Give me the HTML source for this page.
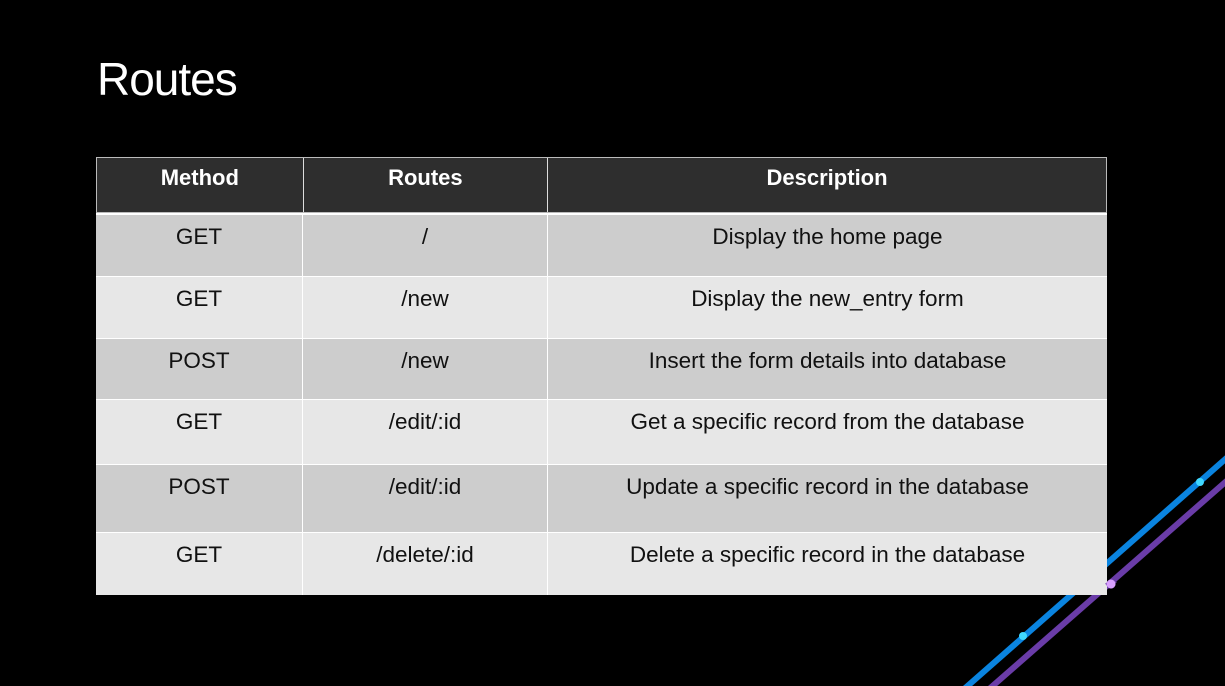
<!DOCTYPE html>
<html><head><style>
body{margin:0;width:1225px;height:686px;background:#000;overflow:hidden;position:relative;font-family:"Segoe UI","Liberation Sans",sans-serif}
h1{position:absolute;left:97px;top:52px;margin:0;font-weight:normal;color:#fff;font-size:46px;letter-spacing:-1px}
.t{position:absolute;left:96px;top:157px;width:1011px;height:438px;background:#fff}
.r{position:absolute;left:0;width:1011px;display:flex}
.r div{box-sizing:border-box;text-align:center;font-size:22.5px;color:#111;padding-top:9px;border-right:1.5px solid #fff}
.c1{width:207px}.c2{width:245px}.c3{width:559px;border-right:none!important}
.h{background:#2e2e2e;top:0;height:56px}
.h div{color:#fff;font-weight:bold;padding-top:7px;border-right:1.5px solid #ddd;font-size:22px}
.d{background:#cdcdcd}.l{background:#e7e7e7}
</style></head><body>
<h1>Routes</h1>
<svg width="1225" height="686" style="position:absolute;left:0;top:0">
<line x1="963" y1="690" x2="1230" y2="455" stroke="#0a84e0" stroke-width="6"/>
<line x1="988" y1="690" x2="1230" y2="478" stroke="#6a3ca8" stroke-width="6"/>
<circle cx="1023" cy="636" r="4" fill="#40d8ff"/>
<circle cx="1200" cy="482" r="4" fill="#40d8ff"/>
<circle cx="1111" cy="584" r="4.5" fill="#d9a0ff"/>
</svg>
<div class="t">
<div class="r h" style="border:1px solid #bbb;box-sizing:border-box"><div class="c1">Method</div><div class="c2">Routes</div><div class="c3">Description</div></div>
<div class="r d" style="top:58px;height:61px"><div class="c1">GET</div><div class="c2">/</div><div class="c3">Display the home page</div></div>
<div class="r l" style="top:120px;height:61px"><div class="c1">GET</div><div class="c2">/new</div><div class="c3">Display the new_entry form</div></div>
<div class="r d" style="top:182px;height:60px"><div class="c1">POST</div><div class="c2">/new</div><div class="c3">Insert the form details into database</div></div>
<div class="r l" style="top:243px;height:64px"><div class="c1">GET</div><div class="c2">/edit/:id</div><div class="c3">Get a specific record from the database</div></div>
<div class="r d" style="top:308px;height:67px"><div class="c1">POST</div><div class="c2">/edit/:id</div><div class="c3">Update a specific record in the database</div></div>
<div class="r l" style="top:376px;height:62px"><div class="c1">GET</div><div class="c2">/delete/:id</div><div class="c3">Delete a specific record in the database</div></div>
</div>
<svg width="1225" height="686" style="position:absolute;left:0;top:0;pointer-events:none">
<line x1="1107" y1="586" x2="1115" y2="580" stroke="#6a3ca8" stroke-width="6"/>
<circle cx="1111" cy="584" r="4.5" fill="#d9a0ff"/>
</svg>
</body></html>
